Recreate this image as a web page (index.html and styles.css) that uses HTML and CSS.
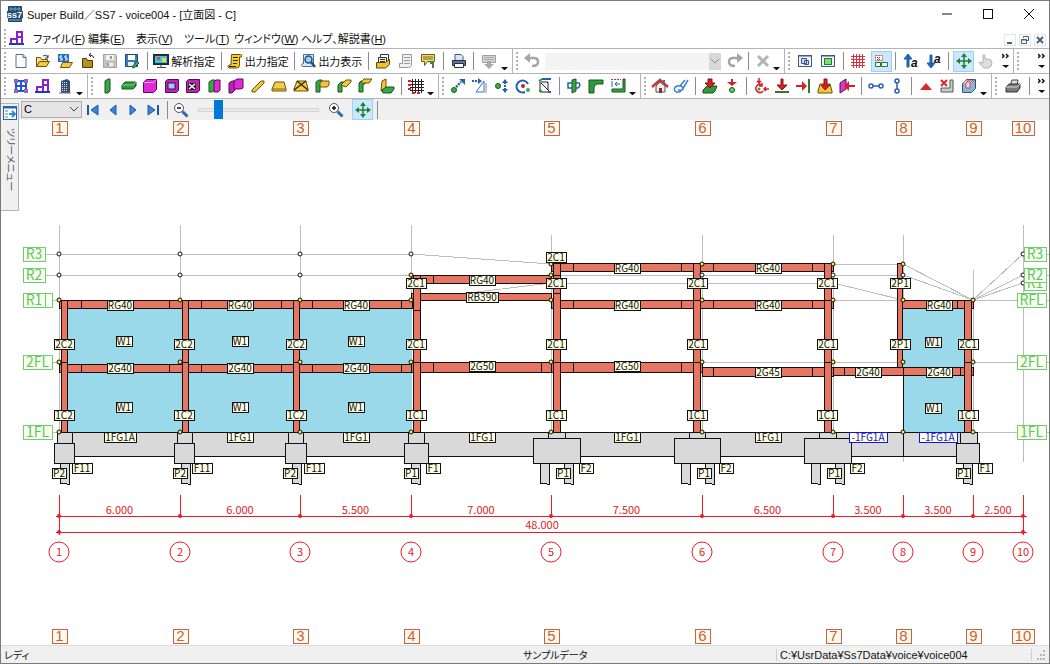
FILE: index.html
```html
<!DOCTYPE html>
<html lang="ja">
<head>
  <meta charset="UTF-8">
  <title>Super Build／SS7 - voice004</title>
  <link rel="stylesheet" href="styles.css">
</head>
<body>
<div class="window">

  <!-- Title bar -->
  <header class="titlebar">
    <svg class="app-icon" viewBox="0 0 16 16"><rect x="1" y="0" width="14" height="16" rx="1" fill="#1d4668"/><path d="M2 3h12M4 1v4M8 1v4M12 1v4" stroke="#6fa3c8" stroke-width="1"/><rect y="5" width="16" height="7" fill="#244f74"/><text x="0" y="12" class="logo-text">ss7</text><path d="M2 14h12" stroke="#85aecb"/></svg>
    <h1>Super Build／SS7 - voice004 - [立面図 - C]</h1>
    <div class="caption-buttons">
      <button title="最小化"><svg viewBox="0 0 10 10"><path d="M0 5h10" stroke="#111"/></svg></button>
      <button title="最大化"><svg viewBox="0 0 10 10"><rect x=".5" y=".5" width="9" height="9" fill="none" stroke="#111"/></svg></button>
      <button title="閉じる"><svg viewBox="0 0 10 10"><path d="M0 0l10 10M10 0L0 10" stroke="#111"/></svg></button>
    </div>
  </header>

  <!-- Menu -->
  <nav class="menubar">
    <i class="grip"></i>
    <svg class="menu-icon" viewBox="0 0 16 16"><path d="M2 14V9h6v5M8 9V2h5v12M8 7h5" fill="none" stroke="#8a1fd0" stroke-width="2"/><path d="M0 14h15" stroke="#1b34e0" stroke-width="2"/></svg>
    <ul>
      <li><a href="#">ファイル(<u>F</u>)</a></li>
      <li><a href="#">編集(<u>E</u>)</a></li>
      <li><a href="#">表示(<u>V</u>)</a></li>
      <li><a href="#">ツール(<u>T</u>)</a></li>
      <li><a href="#">ウィンドウ(<u>W</u>)</a></li>
      <li><a href="#">ヘルプ、解説書(<u>H</u>)</a></li>
    </ul>
    <div class="mdi-buttons">
      <button title="最小化"><svg viewBox="0 0 10 10"><path d="M2 8h5" stroke="#4a6078" stroke-width="2"/></svg></button>
      <button title="元に戻す"><svg viewBox="0 0 10 10"><path d="M3.500 3V1.500h5v4H7M1.500 4.500h5v4h-5zM1.500 5h5" fill="none" stroke="#4a6078"/></svg></button>
      <button title="閉じる"><svg viewBox="0 0 10 10"><path d="M2 2l6 6M8 2L2 8" stroke="#4a6078" stroke-width="2"/></svg></button>
    </div>
  </nav>

  <!-- Toolbar 1 -->
  <div class="toolbar">
    <div class="band band-file">
      <i class="grip"></i>
      <button class="tool" title="新規作成"><svg viewBox="0 0 16 16"><path d="M3 1.500h7l3 3v10H3z" fill="#fdfeff" stroke="#5b6b80"/><path d="M10 1.500v3h3" fill="#cfdcf0" stroke="#5b6b80"/></svg></button>
      <button class="tool" title="開く"><svg viewBox="0 0 16 16"><path d="M1.500 13.500v-9h4l1 2h6v2" fill="#f7e08a" stroke="#6b5310"/><path d="M1.500 13.500l3-5h10l-3 5z" fill="#f5c93e" stroke="#6b5310"/><path d="M8 3q3-2 5 1m0-2v3h-3" fill="none" stroke="#333"/></svg></button>
      <button class="tool" title="SS3データを開く"><svg viewBox="0 0 16 16"><rect x="1" y="1" width="11" height="8" fill="#246ec0"/><path d="M5 3H3v2h2v2H3M10 3H8v2h2v2H8" fill="none" stroke="#fff"/><path d="M3.500 14.500l2-5h10l-3 5z" fill="#f5c93e" stroke="#6b5310"/></svg></button>
      <button class="tool" title="閉じる"><svg viewBox="0 0 16 16"><path d="M2.500 14.500v-9h4l1 2h5v7z" fill="#b8901c" stroke="#4c3b06"/><path d="M14 5q-1-3-4-3M11 0L9 2l2 2" fill="none" stroke="#222"/></svg></button>
      <button class="tool" title="上書き保存"><svg viewBox="0 0 16 16"><path d="M1.500 1.500h12l1 1v12h-13z" fill="#c9c9c9" stroke="#a2a2a2"/><rect x="4" y="2" width="8" height="5" fill="#f4f4f4"/><rect x="4" y="9" width="8" height="5" fill="#eee" stroke="#aaa"/><path d="M9 3v3M6 10v3" stroke="#999" stroke-width="2"/></svg></button>
      <button class="tool" title="名前を付けて保存"><svg viewBox="0 0 16 16"><path d="M1.500 1.500h12v12h-12z" fill="#3a7ab8" stroke="#1f4a78"/><rect x="4" y="2" width="7" height="5" fill="#fff"/><rect x="4" y="9" width="6" height="4" fill="#e3edf6"/><path d="M8 14l5-6 2 2-5 5z" fill="#41a853" stroke="#1c5c28"/></svg></button>
      <i class="sep"></i>
      <button class="tool wide" title="解析指定"><svg viewBox="0 0 16 16"><rect x=".5" y="1.500" width="15" height="10" fill="#25333c" stroke="#1a2830"/><rect x="2" y="3" width="12" height="7" fill="#35c6e0"/><path d="M4 4h3v3H4z" fill="#e04040"/><path d="M9 5h4v4H9z" fill="#f4d640"/><path d="M8 12v2M4 14.500h9" stroke="#444" stroke-width="1"/></svg>解析指定</button>
      <i class="sep"></i>
      <button class="tool wide" title="出力指定"><svg viewBox="0 0 16 16"><path d="M4.500 1.500h9q2 0 1 2.500h-2v8q0 3-3 3H2q-2-1 0-3h2z" fill="#f4cd2c" stroke="#6a5004"/><path d="M6 4.500h5M6 7.500h5M6 10.500h4M2 13.500h7" stroke="#3a2b00"/></svg>出力指定</button>
      <i class="sep"></i>
      <button class="tool wide" title="出力表示"><svg viewBox="0 0 16 16"><path d="M3.500 1.500h10v10q0 2-2 2h-9q-2-1 0-3h1z" fill="#dfe9f5" stroke="#4c6c92"/><circle cx="8.500" cy="6.500" r="3.500" fill="#9cd0f5" stroke="#234f86" stroke-width="1.500"/><path d="M11 9l4 5" stroke="#234f86" stroke-width="2.500"/></svg>出力表示</button>
      <i class="sep"></i>
      <button class="tool" title="文書一覧"><svg viewBox="0 0 16 16"><path d="M5.500 1.500h8v8h-8z" fill="#fff" stroke="#333"/><path d="M3.500 4.500h8v7h-8zM5 6.500h5M5 8.500h5" fill="#eee" stroke="#333"/><path d="M1.500 9.500h9l4-3v5l-4 3.500h-9z" fill="#f2c22e" stroke="#5d4706"/></svg></button>
      <button class="tool" title="リスト"><svg viewBox="0 0 16 16"><path d="M4.500 1.500h9v11q-1 2-3 2h-9v-4h3z" fill="#f0f0f0" stroke="#999"/><path d="M6 4.500h6M6 7.500h6M6 10.500h6" stroke="#999"/></svg></button>
      <button class="tool" title="メッセージ"><svg viewBox="0 0 16 16"><path d="M1.500 1.500h13v7h-7l-3 4v-4h-3z" fill="#f3d768" stroke="#6a6020"/><path d="M3 4h10M3 6h10" stroke="#7b6c1e"/><path d="M10 8h4v7h-2v-4h-2z" fill="#45853c"/></svg></button>
      <i class="sep"></i>
      <button class="tool" title="印刷"><svg viewBox="0 0 16 16"><path d="M4 7V1.500h6l2 2V7" fill="#d7e5fa" stroke="#40557a"/><path d="M1.500 7.500h13v5h-13z" fill="#67788e" stroke="#263142"/><path d="M3.500 10.500h9v4h-9z" fill="#fff" stroke="#263142"/></svg></button>
      <i class="sep"></i>
      <button class="tool" title="画像出力"><svg viewBox="0 0 16 16"><path d="M1.500 2.500h13v7h-13z" fill="#d5d5d5" stroke="#a0a0a0"/><path d="M3 4.500h10M3 6.500h10" stroke="#aaa"/><path d="M6 8h4v3h3l-5 5-5-5h3z" fill="#aaa"/></svg></button>
      <button class="more" title="その他"></button>
    </div>
    <div class="band band-undo">
      <i class="grip"></i>
      <button class="tool" title="元に戻す"><svg viewBox="0 0 16 16"><path d="M4 5h6q4 0 4 4t-6 4" fill="none" stroke="#a5a5a5" stroke-width="2.500"/><path d="M6 0v10L0 5z" fill="#a5a5a5"/></svg></button>
      <span class="history">
        <select aria-label="操作履歴" disabled></select>
        <svg viewBox="0 0 8 5"><path d="M0 0l4 4 4-4" fill="none" stroke="#8c8c8c"/></svg>
      </span>
      <button class="tool" title="やり直し"><svg viewBox="0 0 16 16"><path d="M12 5H6q-4 0-4 4t6 4" fill="none" stroke="#a5a5a5" stroke-width="2.500"/><path d="M10 0v10l6-5z" fill="#a5a5a5"/></svg></button>
      <i class="sep"></i>
      <button class="tool" title="削除"><svg viewBox="0 0 16 16"><path d="M3 3l10 10M13 3L3 13" stroke="#b3b3b3" stroke-width="3"/></svg></button>
      <button class="more" title="その他"></button>
    </div>
    <div class="band band-view">
      <i class="grip"></i>
      <button class="tool" title="部材表示"><svg viewBox="0 0 16 16"><rect x="1.500" y="2.500" width="13" height="11" fill="#eef4fc" stroke="#40578a"/><path d="M2 3h12" stroke="#40578a" stroke-width="1"/><path d="M4.500 5.500h5v5h-5zM7.500 7.500h4v4h-4z" fill="#cfd7e8" stroke="#40578a"/></svg></button>
      <button class="tool" title="全体表示"><svg viewBox="0 0 16 16"><rect x="1.500" y="2.500" width="13" height="11" fill="#eef4fc" stroke="#40578a"/><path d="M2 3h12" stroke="#40578a" stroke-width="1"/><rect x="4.500" y="5.500" width="7" height="6" fill="#7ddf70" stroke="#228030"/></svg></button>
      <i class="sep"></i>
      <button class="tool" title="グリッド"><svg viewBox="0 0 16 16"><path d="M3.500 1v14M6.500 1v14M9.500 1v14M12.500 1v14M1 3.500h14M1 6.500h14M1 9.500h14M1 12.500h14" stroke="#d8303c"/></svg></button>
      <button class="tool on" title="記号表示"><svg viewBox="0 0 16 16"><path d="M2.500 2.500h7v5h-7z" fill="#fff" stroke="#c05050" stroke-dasharray="2 1"/><path d="M4 4l3 3M7 4L4 7" stroke="#c03030"/><path d="M2.500 9.500h5v4h-5zM8.500 9.500h6v4h-6z" fill="#fff" stroke="#207a2c"/></svg></button>
      <i class="sep"></i>
      <button class="tool" title="文字拡大"><svg viewBox="0 0 16 16"><path d="M4 14V6H1l4-5 4 5H6v8z" fill="#1c62b8" stroke="#1c62b8"/><text x="8" y="14" class="glyph-a">a</text></svg></button>
      <button class="tool" title="文字縮小"><svg viewBox="0 0 16 16"><path d="M4 2v8H1l4 5 4-5H6V2z" fill="#1c62b8" stroke="#1c62b8"/><text x="8" y="10" class="glyph-a">a</text></svg></button>
      <i class="sep"></i>
      <button class="tool on" title="移動"><svg viewBox="0 0 16 16"><path d="M8 2v12M2 8h12" stroke="#208038" stroke-width="1.500"/><path d="M8 0l3 4H5zM8 16l3-4H5zM0 8l4-3v6zM16 8l-4-3v6z" fill="#208038"/></svg></button>
      <button class="tool" title="つかむ"><svg viewBox="0 0 16 16"><path d="M5 2q2-1 2 2v2h3q4 0 4 4t-4 5H6q-3-2-5-6l4 1z" fill="#ddd" stroke="#b4b4b4"/></svg></button>
      <button class="chevron" title="その他"><svg viewBox="0 0 8 16"><path d="M0 1l2 2-2 2M4 1l2 2-2 2" fill="none" stroke="#111" stroke-width="1.500"/><path d="M0 12h7l-3 3z" fill="#111"/></svg></button>
    </div>
    <div class="band band-last">
      <i class="grip"></i>
      <button class="chevron" title="その他"><svg viewBox="0 0 8 16"><path d="M0 1l2 2-2 2M4 1l2 2-2 2" fill="none" stroke="#111" stroke-width="1.500"/><path d="M0 12h7l-3 3z" fill="#111"/></svg></button>
    </div>
  </div>

  <!-- Toolbar 2 -->
  <div class="toolbar">
    <div class="band band-frame">
      <i class="grip"></i>
      <button class="tool" title="伏図"><svg viewBox="0 0 16 16"><path d="M3 3h10v10H3zM8 3v10M3 8h10" fill="none" stroke="#1e58d8" stroke-width="2"/><path d="M1 1h4v4H1zM11 1h4v4h-4zM1 11h4v4H1zM11 11h4v4h-4z" fill="#9a62b8"/></svg></button>
      <button class="tool" title="立面図"><svg viewBox="0 0 16 16"><path d="M2 14V9h6v5M8 9V2h5v12M8 7h5" fill="none" stroke="#8a1fd0" stroke-width="2"/><path d="M0 14h15" stroke="#1b34e0" stroke-width="2"/></svg></button>
      <button class="tool" title="建物"><svg viewBox="0 0 16 16"><path d="M4 3l6-2 3 2v12H4z" fill="#35506e"/><path d="M5 4.500h5M5 6.500h5M5 8.500h5M5 10.500h5M5 12.500h5" stroke="#d6e6f5" stroke-dasharray="1 1"/><path d="M2 15h12" stroke="#777"/></svg></button>
      <button class="more" title="その他"></button>
    </div>
    <div class="band band-member">
      <i class="grip"></i>
      <button class="tool" title="柱"><svg viewBox="0 0 16 16"><path d="M6 3l3-2h2v12l-2 2H6z" fill="#3aa648" stroke="#14571e"/></svg></button>
      <button class="tool" title="梁"><svg viewBox="0 0 16 16"><path d="M1 7l3-3h11v4l-3 3H1z" fill="#2f9a3c" stroke="#14571e"/><path d="M1 7h11l3-3" fill="none" stroke="#7fd388"/></svg></button>
      <button class="tool" title="壁"><svg viewBox="0 0 16 16"><path d="M1.500 4.500l3-3h10v10l-3 3h-10z" fill="#e02ad6" stroke="#5a0a56"/><path d="M2 4.500h10l2-3" fill="none" stroke="#f7a0f2"/></svg></button>
      <button class="tool" title="開口"><svg viewBox="0 0 16 16"><path d="M1.500 3.500l2-2h11v11l-2 2h-11z" fill="#c022b8" stroke="#5a0a56"/><rect x="4" y="5" width="7" height="6" fill="#8cd3f5" stroke="#4a0a46"/></svg></button>
      <button class="tool" title="開口削除"><svg viewBox="0 0 16 16"><path d="M1.500 3.500l2-2h11v11l-2 2h-11z" fill="#c022b8" stroke="#5a0a56"/><rect x="3" y="5" width="8" height="7" fill="#222"/><path d="M4 6l6 5M10 6l-6 5" stroke="#fff" stroke-width="1.500"/></svg></button>
      <button class="tool" title="袖壁"><svg viewBox="0 0 16 16"><path d="M2 4l3-2h3v10l-3 2H2z" fill="#3aa648" stroke="#14571e"/><path d="M7 4l2-2h4v10l-2 2H7z" fill="#e02ad6" stroke="#5a0a56"/></svg></button>
      <button class="tool" title="腰壁"><svg viewBox="0 0 16 16"><path d="M1 5l3-2h3v9l-3 3H1z" fill="#c022b8" stroke="#5a0a56"/><path d="M6 3l3-2h6v9l-3 1H6z" fill="#e02ad6" stroke="#5a0a56"/></svg></button>
      <button class="tool" title="ブレース"><svg viewBox="0 0 16 16"><path d="M2 12l9-9h3v2l-9 9H2z" fill="#f2c73a" stroke="#6a5004"/></svg></button>
      <button class="tool" title="床"><svg viewBox="0 0 16 16"><path d="M4 4h9l2 7v2H1v-2z" fill="#f2cd4a" stroke="#6a5004"/><path d="M1 11h14" stroke="#8a6a0c"/></svg></button>
      <button class="tool" title="床ブレース"><svg viewBox="0 0 16 16"><path d="M4 3h9l2 8v2H1v-2z" fill="#f2cd4a" stroke="#6a5004"/><path d="M4 3l11 9M13 3L1 12" stroke="#3c2c00" stroke-width="1.500"/></svg></button>
      <button class="tool" title="片持梁"><svg viewBox="0 0 16 16"><path d="M2 4l3-2h3v4l-2 1v7H2z" fill="#3aa648" stroke="#14571e"/><path d="M6 5l2-2h7v4l-2 2H6z" fill="#f2c73a" stroke="#6a5004"/></svg></button>
      <button class="tool" title="片持床"><svg viewBox="0 0 16 16"><path d="M2 7l3-3h3l-2 4v6H2z" fill="#3aa648" stroke="#14571e"/><path d="M5 7l5-5h5v2l-5 5z" fill="#f2c73a" stroke="#6a5004"/></svg></button>
      <button class="tool" title="出隅"><svg viewBox="0 0 16 16"><path d="M2 5l2-2h4v3H6v8H2z" fill="#3aa648" stroke="#14571e"/><path d="M4 4l3-3h8l-3 4H5z" fill="#f2c73a" stroke="#6a5004"/></svg></button>
      <button class="tool" title="入隅"><svg viewBox="0 0 16 16"><path d="M3 3l4-2v8l-2 4H2z" fill="#f2c73a" stroke="#6a5004"/><path d="M3 12l4-3h8v2l-3 4H4z" fill="#3aa648" stroke="#14571e"/></svg></button>
      <i class="sep"></i>
      <button class="tool" title="配置グリッド"><svg viewBox="0 0 16 16"><path d="M4.500 1v14M7.500 1v14M10.500 1v14M13.500 1v14M2 3.500h14M2 6.500h14M2 9.500h14M2 12.500h14" stroke="#222"/><path d="M0 2h3v2H0zM0 6h3v2H0zM0 10h3v2H0zM4 14h3v2H4zM9 14h3v2H9z" fill="#e01c24"/></svg></button>
      <button class="more" title="その他"></button>
    </div>
    <div class="band band-node">
      <i class="grip"></i>
      <button class="tool" title="節点移動"><svg viewBox="0 0 16 16"><circle cx="4" cy="12" r="2.500" fill="#3cae4a" stroke="#14571e"/><path d="M6 9l5-5" stroke="#2461b4" stroke-width="2.500" stroke-dasharray="2 1"/><path d="M9 1h6v6z" fill="#2461b4"/></svg></button>
      <button class="tool" title="軸振れ"><svg viewBox="0 0 16 16"><path d="M0 3h7" stroke="#2461b4" stroke-width="2" stroke-dasharray="2 1"/><path d="M6 0l4 3-4 3z" fill="#2461b4"/><path d="M12 3v11H4z" fill="none" stroke="#3272d0"/><path d="M14 5v10" stroke="#888"/></svg></button>
      <button class="tool" title="上下移動"><svg viewBox="0 0 16 16"><circle cx="4" cy="8" r="2.500" fill="#3cae4a" stroke="#14571e"/><path d="M11 4v8" stroke="#2461b4" stroke-width="2" stroke-dasharray="2 1"/><path d="M8 5l3-4 3 4zM8 11l3 4 3-4z" fill="#2461b4"/></svg></button>
      <button class="tool" title="回転"><svg viewBox="0 0 16 16"><path d="M13 6A6 6 0 1 0 10 14" fill="none" stroke="#2461b4" stroke-width="2"/><circle cx="8" cy="8" r="2" fill="#c42020"/><circle cx="13" cy="12" r="2" fill="#3cae4a"/></svg></button>
      <button class="tool" title="傾斜"><svg viewBox="0 0 16 16"><path d="M3 3v11h9M4 5l8 8M4 4h7v8" fill="none" stroke="#222"/><path d="M5 1h9M11 14h3" stroke="#2461b4" stroke-width="2"/><path d="M2 3l3-2M2 13h3" stroke="#2f9a3c" stroke-width="2"/></svg></button>
      <i class="sep"></i>
      <button class="tool" title="部材回転"><svg viewBox="0 0 16 16"><path d="M6 5H2v5h4M9 5h4q2 3-1 5H9" fill="none" stroke="#2461b4" stroke-width="1.500"/><path d="M6 2l4-1v12l-4 2z" fill="#3aa648" stroke="#14571e"/></svg></button>
      <button class="tool" title="ハンチ"><svg viewBox="0 0 16 16"><path d="M1 2h14v4H9q-3 1-3 4v5H1z" fill="#2f9a3c" stroke="#14571e"/></svg></button>
      <button class="tool" title="寄り"><svg viewBox="0 0 16 16"><path d="M1 1.500h10" stroke="#d03030" stroke-dasharray="2 1"/><path d="M13 1h2v13H2v-3h11z" fill="#3aa648" stroke="#14571e"/><path d="M2 3v6M5 6h5M7 4L5 6l2 2" fill="none" stroke="#2461b4"/></svg></button>
      <button class="more" title="その他"></button>
    </div>
    <div class="band band-load">
      <i class="grip"></i>
      <button class="tool" title="屋根"><svg viewBox="0 0 16 16"><path d="M4 8v6h9V8L8 4z" fill="#eee" stroke="#555"/><path d="M0 9l8-7 8 7" fill="none" stroke="#c43a32" stroke-width="2.500"/><path d="M7 10h3v5H7z" fill="#7a3320"/><path d="M12 2v4" stroke="#666" stroke-width="2"/></svg></button>
      <button class="tool" title="クリップ"><svg viewBox="0 0 16 16"><path d="M15 2l-6 10q-4 4-7 1-2-3 2-5 5-1 6 2t-5 2M12 2L7 8" fill="none" stroke="#3c82cc" stroke-width="1.500"/></svg></button>
      <i class="sep"></i>
      <button class="tool" title="床荷重"><svg viewBox="0 0 16 16"><path d="M1 12l4-4h10l-2 5-2 2H1z" fill="#2f9a3c" stroke="#14571e"/><path d="M6 1h4v4h3l-5 5-5-5h3z" fill="#d81e26" stroke="#8a0c10"/></svg></button>
      <button class="tool" title="節点荷重"><svg viewBox="0 0 16 16"><path d="M7 1h2v3h4L8 8 3 4h4z" fill="#d81e26"/><circle cx="8" cy="12" r="2.500" fill="#5ad068" stroke="#14571e"/></svg></button>
      <i class="sep"></i>
      <button class="tool" title="モーメント荷重"><svg viewBox="0 0 16 16"><path d="M6 0v4M4 3l2 2 2-2M16 11h-4M13 9l-2 2 2 2M9 7a4 4 0 1 0 1 6M9 5v3H6" fill="none" stroke="#d81e26" stroke-width="1.500"/><circle cx="6" cy="11" r="1.500" fill="#2f9a3c"/></svg></button>
      <button class="tool" title="鉛直荷重"><svg viewBox="0 0 16 16"><path d="M7 1h2v6h4l-5 5-5-5h4z" fill="#d81e26" stroke="#9a1015"/><path d="M1 14h14" stroke="#2f7a30" stroke-width="2"/></svg></button>
      <button class="tool" title="水平荷重"><svg viewBox="0 0 16 16"><path d="M0 7h6V3l5 5-5 5V9H0z" fill="#d81e26"/><path d="M13 1v14" stroke="#2f7a30" stroke-width="2"/></svg></button>
      <button class="tool" title="面荷重"><svg viewBox="0 0 16 16"><path d="M3 6h10l2 7v2H1v-2z" fill="#f2c73a" stroke="#6a5004"/><path d="M7 1h3v6h3l-5 5-4-5h3z" fill="#d81e26" stroke="#9a1015"/></svg></button>
      <button class="tool" title="壁荷重"><svg viewBox="0 0 16 16"><path d="M1 5l6-4v10l-6 4z" fill="#d638cc" stroke="#5a0a56"/><path d="M16 7h-6V3L5 8l5 5V9h6z" fill="#d81e26"/></svg></button>
      <i class="sep"></i>
      <button class="tool" title="剛床"><svg viewBox="0 0 16 16"><circle cx="3" cy="8" r="2" fill="#fff" stroke="#2461b4" stroke-width="1.500"/><circle cx="13" cy="8" r="2" fill="#fff" stroke="#2461b4" stroke-width="1.500"/><path d="M5 8h6" stroke="#2461b4" stroke-width="1.500"/></svg></button>
      <button class="tool" title="同一変位"><svg viewBox="0 0 16 16"><circle cx="8" cy="3" r="2" fill="#fff" stroke="#2461b4" stroke-width="1.500"/><circle cx="8" cy="13" r="2" fill="#fff" stroke="#2461b4" stroke-width="1.500"/><path d="M8 5v6" stroke="#2461b4" stroke-width="1.500"/></svg></button>
      <i class="sep"></i>
      <button class="tool" title="支点"><svg viewBox="0 0 16 16"><path d="M8 5l6 7H2z" fill="#e0262c"/></svg></button>
      <button class="tool" title="部材無効"><svg viewBox="0 0 16 16"><path d="M11 2h3v12H2v-4h9z" fill="#ccc" stroke="#555"/><path d="M2 2l6 6M8 2L2 8" stroke="#e0262c" stroke-width="2"/></svg></button>
      <button class="tool" title="ブロック"><svg viewBox="0 0 16 16"><path d="M1.500 5.500l4-4h9v9l-4 4h-9z" fill="#88b6d8" stroke="#31536f"/><path d="M2 5l3-3h3L5 5v5h4V5l3-3h2l-3 3" fill="#f6dada" stroke="#d8484e"/></svg></button>
      <button class="more" title="その他"></button>
    </div>
    <div class="band band-print">
      <i class="grip"></i>
      <button class="tool" title="図面出力"><svg viewBox="0 0 16 16"><path d="M5 8l2-6h6l-1 6" fill="#ddd" stroke="#444"/><path d="M1 9l3-3h11v4l-3 4H1z" fill="#7b7b7b" stroke="#333"/><path d="M1 9h11l3-3" fill="none" stroke="#ddd"/></svg></button>
      <i class="sep"></i>
      <button class="chevron" title="その他"><svg viewBox="0 0 8 16"><path d="M0 1l2 2-2 2M4 1l2 2-2 2" fill="none" stroke="#111" stroke-width="1.500"/><path d="M0 12h7l-3 3z" fill="#111"/></svg></button>
    </div>
  </div>

  <!-- Work area -->
  <main class="work">
    <aside class="dock">
      <button class="tree-tab"><svg viewBox="0 0 14 14"><rect x=".5" y=".5" width="13" height="13" fill="#fff" stroke="#2263b8"/><path d="M0 1h14" stroke="#2263b8" stroke-width="3"/><path d="M2 5h3M2 8h3M2 11h3" stroke="#4b83c8"/><path d="M6 8h5M9 5l3 3-3 3" fill="none" stroke="#2a8ad6" stroke-width="2"/></svg><span>ツリーメニュー</span></button>
    </aside>

    <section class="view">
      <div class="viewbar">
        <label class="frame-pick">
          <select aria-label="フレーム"><option>C</option></select>
          <svg viewBox="0 0 8 5"><path d="M0 0l4 4 4-4" fill="none" stroke="#444"/></svg>
        </label>
        <button class="step" title="先頭"><svg viewBox="0 0 12 12"><path d="M1 1v10" stroke="#1f57a8" stroke-width="2"/><path d="M11 1v10L4 6z" fill="#3a84dc" stroke="#1f57a8"/></svg></button>
        <button class="step" title="前へ"><svg viewBox="0 0 12 12"><path d="M9 1v10L3 6z" fill="#3a84dc" stroke="#1f57a8"/></svg></button>
        <button class="step" title="次へ"><svg viewBox="0 0 12 12"><path d="M3 1v10l6-5z" fill="#3a84dc" stroke="#1f57a8"/></svg></button>
        <button class="step" title="末尾"><svg viewBox="0 0 12 12"><path d="M11 1v10" stroke="#1f57a8" stroke-width="2"/><path d="M1 1v10l7-5z" fill="#3a84dc" stroke="#1f57a8"/></svg></button>
        <i class="sep"></i>
        <button class="tool" title="縮小"><svg viewBox="0 0 16 16"><circle cx="6" cy="6" r="4.500" fill="#fff" stroke="#555"/><path d="M4 6h4" stroke="#111" stroke-width="1.500"/><path d="M9.500 9.500l5 5" stroke="#2c68b0" stroke-width="3"/></svg></button>
        <input class="zoom" type="range" min="0" max="100" value="14" aria-label="表示倍率">
        <button class="tool" title="拡大"><svg viewBox="0 0 16 16"><circle cx="6" cy="6" r="4.500" fill="#fff" stroke="#555"/><path d="M4 6h4M6 4v4" stroke="#111" stroke-width="1.500"/><path d="M9.500 9.500l5 5" stroke="#2c68b0" stroke-width="3"/></svg></button>
        <button class="tool on" title="移動"><svg viewBox="0 0 16 16"><path d="M8 2v12M2 8h12" stroke="#208038" stroke-width="1.500"/><path d="M8 0l3 4H5zM8 16l3-4H5zM0 8l4-3v6zM16 8l-4-3v6z" fill="#208038"/></svg></button>
        <i class="sep"></i>
      </div>
      <svg id="elevation" class="elevation" viewBox="20 120 1029 525" preserveAspectRatio="xMidYMin meet" role="img" aria-label="立面図 C"></svg>
    </section>
  </main>

  <!-- Status bar -->
  <footer class="statusbar">
    <span class="status-ready">レディ</span>
    <span class="status-name">サンプルデータ</span>
    <span class="status-path">C:¥UsrData¥Ss7Data¥voice¥voice004</span>
    <svg viewBox="0 0 12 12"><path d="M8 1h2v2H8zM5 5h2v2H5zM8 5h2v2H8zM2 9h2v2H2zM5 9h2v2H5zM8 9h2v2H8z" fill="#b5b5b5"/></svg>
  </footer>

</div>
<script src="elevation.js"></script>
</body>
</html>
```
FILE: styles.css
```css
* {
  box-sizing: border-box;
}

body {
  margin: 0;
  font-family: "Liberation Sans", "Noto Sans CJK JP", sans-serif;
  font-size: 11px;
  color: #111;
}

button {
  padding: 0;
  border: 0;
  background: none;
  font: inherit;
  color: inherit;
}

svg {
  display: block;
}

.window {
  display: flex;
  flex-direction: column;
  height: 100vh;
  border: 1px solid #7a7a7a;
  background-color: #fff;
}

/* title bar */
.titlebar {
  display: flex;
  align-items: center;
  height: 26px;
  padding-left: 6px;
}

.app-icon {
  width: 16px;
  height: 16px;
  margin-right: 4px;
}

.logo-text {
  font: bold 9px "Liberation Sans", sans-serif;
  fill: #fff;
}

h1 {
  flex: 1;
  margin: 0;
  font-size: 11px;
  font-weight: normal;
}

.caption-buttons {
  display: flex;
}

.caption-buttons button {
  width: 41px;
  height: 26px;
}

.caption-buttons svg {
  width: 10px;
  height: 10px;
  margin: 0 auto;
}

/* menu */
.menubar {
  display: flex;
  align-items: center;
  height: 22px;
  border-bottom: 1px solid #b4b4b4;
}

.menu-icon {
  width: 16px;
  height: 16px;
  margin: 0 8px 0 0;
}

.menubar ul {
  display: grid;
  grid-template-columns: 55px 48px 48px 50px 67px auto;
  flex: 1;
  justify-content: start;
  margin: 0;
  padding: 0;
  list-style: none;
  white-space: nowrap;
  font-feature-settings: "palt";
}

.menubar a {
  color: #111;
  text-decoration: none;
}

.mdi-buttons {
  display: flex;
  gap: 3px;
  padding: 4px 3px 0 0;
}

.mdi-buttons button {
  width: 12px;
  height: 12px;
  border: 1px solid #e2e6ea;
}

.mdi-buttons svg {
  width: 10px;
  height: 10px;
}

/* toolbars */
.toolbar {
  display: flex;
  height: 25px;
  border-bottom: 1px solid #b4b4b4;
}

.band {
  display: flex;
  flex: none;
  align-items: center;
  justify-content: space-between;
  padding-right: 4px;
  border-right: 1px solid #b4b4b4;
}

.band:last-child {
  flex: 1;
  border-right: 0;
}

.band-file { width: 512px; }
.band-undo { width: 272px; }
.band-view { width: 229px; padding-right: 0; }
.band-frame { width: 87px; }
.band-member { width: 351px; }
.band-node { width: 202px; }
.band-load { width: 351px; }
.band-last, .band-print { padding-right: 0; }

.grip {
  width: 2px;
  height: 18px;
  margin: 0 3px;
  background: repeating-linear-gradient(#b0b0b0 0 2px, transparent 2px 4px);
}

.sep {
  width: 1px;
  height: 18px;
  margin: 0 3px;
  background-color: #8c8c8c;
}

.band-view .sep {
  margin: 0 2px;
}

.tool {
  flex: none;
  width: 21px;
  height: 21px;
}

.tool svg {
  width: 16px;
  height: 16px;
  margin: 0 auto;
  overflow: visible;
}

.tool.on {
  border: 1px solid #99d1ff;
  background-color: #cce8ff;
}

.tool.wide {
  display: flex;
  align-items: center;
  gap: 2px;
  width: auto;
  padding: 0 1px;
}

.more {
  align-self: end;
  width: 7px;
  height: 10px;
}

.more::after {
  content: "";
  display: block;
  border: 3px solid transparent;
  border-top-color: #111;
  border-bottom: 0;
}

.chevron {
  width: 14px;
}

.chevron svg {
  width: 8px;
  height: 16px;
  margin: 0 auto;
}

.glyph-a {
  font: italic bold 12px "Liberation Sans", sans-serif;
  fill: #111;
}

.history {
  position: relative;
  flex: 1;
  margin: 0 3px;
}

.history select {
  display: block;
  width: 100%;
  height: 17px;
  border: 0;
  border-right: 12px solid #c8c8c8;
  background-color: #f0f0f0;
  appearance: none;
}

.history svg {
  position: absolute;
  top: 6px;
  right: 2px;
  width: 8px;
  height: 5px;
}

/* work area */
.work {
  display: flex;
  flex: 1;
  min-height: 0;
}

.dock {
  display: flex;
  align-items: start;
  width: 19px;
  padding-top: 4px;
  background: linear-gradient(#f0f0f0 21px, #fff 21px);
}

.tree-tab {
  display: flex;
  flex-direction: column;
  align-items: center;
  gap: 8px;
  width: 18px;
  height: 108px;
  padding-top: 2px;
  border: 1px solid #b4b4b4;
  border-left: 0;
  background-color: #f0f0f0;
  color: #555;
  font-size: 10px;
}

.tree-tab svg {
  width: 14px;
  height: 14px;
}

.tree-tab span {
  writing-mode: vertical-rl;
  text-orientation: sideways;
  line-height: 14px;
  font-feature-settings: "palt";
}

.view {
  display: flex;
  flex: 1;
  flex-direction: column;
  min-width: 0;
}

.viewbar {
  display: flex;
  align-items: center;
  height: 21px;
  padding-left: 1px;
  background-color: #f0f0f0;
}

.frame-pick {
  position: relative;
  margin-right: 1px;
}

.frame-pick select {
  display: block;
  width: 61px;
  height: 17px;
  padding: 0 2px;
  border: 1px solid #adadad;
  background-color: #e4e4e4;
  font: 11px/15px "Liberation Sans", sans-serif;
  appearance: none;
}

.frame-pick svg {
  position: absolute;
  top: 6px;
  right: 4px;
  width: 8px;
  height: 5px;
  pointer-events: none;
}

.step {
  width: 20px;
  height: 20px;
}

.step svg {
  width: 12px;
  height: 12px;
  margin: 0 auto;
}

.viewbar .sep {
  margin: 0 2px 0 4px;
}

.zoom {
  width: 121px;
  height: 19px;
  margin: 0 6px 0 7px;
  background: none;
  appearance: none;
}

.zoom::-webkit-slider-runnable-track {
  height: 4px;
  border: 1px solid #d6d6d6;
  background-color: #e7eaea;
}

.zoom::-webkit-slider-thumb {
  width: 9px;
  height: 19px;
  margin-top: -9px;
  background-color: #0078d7;
  appearance: none;
}

.zoom + .tool {
  margin-right: 6px;
}

/* elevation drawing */
.elevation {
  flex: 1;
  width: 100%;
  min-height: 0;
  font-family: "Noto Sans CJK JP", sans-serif;
  font-size: 11px;
  text-anchor: middle;
}

.elevation line,
.elevation rect,
.elevation path {
  shape-rendering: crispEdges;
}

.guide { stroke: #bdbdbd; }
.wall { fill: #99d9ea; }
.steel { fill: #e67562; stroke: #111; }
.joint { stroke: #111; }
.concrete { fill: #d9d9d9; stroke: #111; }
.node { fill: #f4ee4a; stroke: #111; }
.node.free { fill: #fff; }

.tag rect { fill: #ffffe6; stroke: #111; }
.tag text { fill: #111; font-size: 10px; }
.tag.minus rect { stroke: #1414e0; }
.tag.minus text { fill: #1414e0; }

.dimension line { stroke: #ee1c24; }
.dimension circle { fill: none; stroke: #ee1c24; }
.dimension circle.dot { fill: #ee1c24; stroke: none; }
.dimension text { fill: #e01c24; }

.axis rect { fill: #fffbe6; stroke: #c8604c; }
.axis text { fill: #c8604c; font: 15px "Liberation Sans", sans-serif; }
.floor rect { fill: #fafff0; stroke: #6cd06c; }
.floor text { fill: #5cc85c; font-size: 14px; }

/* status bar */
.statusbar {
  display: flex;
  align-items: center;
  height: 18px;
  padding: 0 2px 0 3px;
  border-top: 1px solid #dcdcdc;
  background-color: #f0f0f0;
  font-feature-settings: "palt";
}

.status-ready,
.status-name {
  font-size: 10px;
}

.status-ready {
  flex: 1;
}

.status-name {
  width: 253px;
}

.status-path {
  width: 256px;
  padding-left: 3px;
  border-left: 1px solid #d0d0d0;
  border-right: 1px solid #d0d0d0;
}

.statusbar svg {
  width: 12px;
  height: 12px;
  margin-left: 3px;
}
```
FILE: elevation.js
```js
const svg = document.getElementById('elevation');
const parts = [];

const axes = [59, 180, 300, 411, 551, 702, 833, 903, 973, 1023];
const spans = ['6.000', '6.000', '5.500', '7.000', '7.500', '6.500', '3.500', '3.500', '2.500'];

function line(x1, y1, x2, y2, cls) {
  parts.push(`<line class="${cls}" x1="${x1}" y1="${y1}" x2="${x2}" y2="${y2}"/>`);
}

function rect(x1, y1, x2, y2, cls) {
  parts.push(`<rect class="${cls}" x="${x1}" y="${y1}" width="${x2 - x1}" height="${y2 - y1}"/>`);
}

function beam(x1, x2, y1, y2, joints) {
  rect(x1, y1, x2, y2, 'steel');
  joints.forEach(x => line(x, y1, x, y2, 'joint'));
}

function tag(cx, cy, text, cls = 'tag') {
  const w = text[0] === 'W' ? 16 : text.length * 6 + 2;
  const x = Math.floor(cx - w / 2);
  parts.push(`<g class="${cls}"><rect x="${x}" y="${cy - 5}" width="${w}" height="10"/><text x="${x + w / 2}" y="${cy + 4}">${text}</text></g>`);
}

function box(x, y, w, text, cls) {
  parts.push(`<g class="${cls}"><rect x="${x}" y="${y}" width="${w}" height="14"/><text x="${x + w / 2}" y="${y + 12}">${text}</text></g>`);
}

// guide lines
axes.forEach((x, i) => {
  const top = i < 4 || i === 9 ? 225 : i === 8 ? 270 : 235;
  line(x, top, x, 462, 'guide');
});
[
  [45, 254, 411, 254], [411, 254, 551, 264], [833, 264, 903, 264], [903, 264, 973, 300],
  [45, 275, 903, 275], [903, 275, 973, 300],
  [411, 300, 551, 283], [551, 283, 833, 283], [833, 283, 903, 300],
  [52, 300, 411, 300], [833, 300, 1017, 300],
  [973, 300, 1023, 254], [973, 300, 1023, 275], [973, 300, 1023, 283],
  [52, 362, 411, 362], [702, 362, 1017, 362], [52, 432, 1017, 432],
  [1046, 254, 1049, 254], [1046, 275, 1049, 275], [1046, 300, 1049, 300], [1046, 362, 1049, 362], [1046, 432, 1049, 432]
].forEach(g => line(...g, 'guide'));

// walls
[[65, 185], [185, 296], [296, 412]].forEach(([a, b]) => {
  rect(a, 308, b, 364, 'wall');
  rect(a, 372, b, 432, 'wall');
});
rect(903, 308, 966, 367, 'wall');
rect(903, 375, 966, 432, 'wall');

// foundation
rect(70, 432, 962, 456, 'concrete');
line(903, 432, 903, 456, 'joint');

function pile(x, w) {
  parts.push(`<path class="concrete" d="M${x} 463v20l3 1 2-1 2 1h${w - 7}V463z"/>`);
}
[
  [57, 72, 54, 74, 443, [60]],
  [177, 192, 174, 194, 443, [181]],
  [288, 303, 285, 306, 443, [292]],
  [408, 424, 404, 428, 443, [411]],
  [548, 565, 533, 580, 438, [540, 564]],
  [689, 705, 674, 720, 438, [681, 705]],
  [819, 836, 804, 851, 438, [811, 835]],
  [960, 977, 956, 979, 443, [963]]
].forEach(([p1, p2, f1, f2, top, piles]) => {
  piles.forEach(x => pile(x, 9));
  rect(p1, 432, p2, top, 'concrete');
  rect(f1, top, f2, 463, 'concrete');
});

// beams
const jointsWest = [81, 169, 201, 281, 312, 401];
beam(59, 412, 300, 308, jointsWest);
beam(59, 412, 364, 372, jointsWest);
beam(411, 551, 275, 283, [420, 433]);
beam(411, 551, 293, 300, []);
beam(411, 551, 362, 372, [433, 541]);
beam(551, 702, 362, 372, [573, 681]);
beam(551, 833, 263, 271, [573, 681, 713, 812]);
beam(551, 833, 300, 308, [573, 681, 713, 812]);
beam(702, 833, 367, 376, [713, 812]);
beam(833, 973, 367, 375, [844, 903, 960]);
beam(897, 973, 300, 308, [952, 957]);

// columns: x1, x2, top, storey joints
[
  [61, 67, 300, [362]], [182, 188, 300, [362]], [293, 299, 300, [362]],
  [413, 420, 275, [310, 362]], [553, 560, 263, [275, 293, 362]], [693, 700, 263, [300, 362]],
  [824, 831, 263, [300, 362]], [964, 971, 300, [362]]
].forEach(([a, b, top, joints]) => {
  rect(a, top, b, 432, 'steel');
  joints.forEach(y => line(a, y, b, y, 'joint'));
});
rect(897, 263, 902, 367, 'steel');
line(903, 376, 903, 432, 'joint');

// nodes
const fixed = [300, 362, 432];
const nodes = [
  [59, fixed, [254, 275]], [180, fixed, [254, 275]], [300, fixed, [254, 275]],
  [411, [275, ...fixed], [254]], [551, [264, 275, ...fixed], []],
  [702, [264, ...fixed], [275]], [833, [264, ...fixed], [275]], [903, [264, ...fixed], [275]],
  [973, fixed, []], [1023, [], [254, 275, 283]]
];
nodes.forEach(([x, on, free]) => {
  on.forEach(y => parts.push(`<circle class="node" cx="${x}" cy="${y}" r="2"/>`));
  free.forEach(y => parts.push(`<circle class="node free" cx="${x}" cy="${y}" r="2"/>`));
});

// member tags
[120, 240, 356].forEach(x => {
  tag(x, 305, 'RG40');
  tag(x, 368, '2G40');
});
[124, 240, 356].forEach(x => {
  tag(x, 341, 'W1');
  tag(x, 407, 'W1');
});
[64, 184, 296].forEach(x => {
  tag(x, 344, '2C2');
  tag(x, 415, '1C2');
});
[416, 556, 697, 827].forEach(x => {
  tag(x, 283, '2C1');
  tag(x, 344, '2C1');
  tag(x, 415, '1C1');
});
[
  [556, 257, '2C1'], [900, 283, '2P1'], [900, 344, '2P1'], [968, 344, '2C1'], [968, 415, '1C1'],
  [482, 280, 'RG40'], [482, 297, 'RB390'], [482, 366, '2G50'], [627, 366, '2G50'],
  [627, 268, 'RG40'], [627, 305, 'RG40'], [768, 268, 'RG40'], [768, 305, 'RG40'],
  [768, 372, '2G45'], [868, 372, '2G40'], [939, 372, '2G40'], [939, 305, 'RG40'],
  [933, 342, 'W1'], [933, 408, 'W1'],
  [120, 437, '1FG1A'], [240, 437, '1FG1'], [356, 437, '1FG1'], [482, 437, '1FG1'],
  [627, 437, '1FG1'], [768, 437, '1FG1'],
  [82, 468, 'F11'], [202, 468, 'F11'], [314, 468, 'F11'],
  [433, 468, 'F1'], [586, 468, 'F2'], [726, 468, 'F2'], [857, 468, 'F2'], [985, 468, 'F1'],
  [59, 473, 'P2'], [180, 473, 'P2'], [290, 473, 'P2'],
  [411, 473, 'P1'], [563, 473, 'P1'], [704, 473, 'P1'], [834, 473, 'P1'], [963, 473, 'P1']
].forEach(t => tag(...t));
tag(868, 437, '-1FG1A', 'tag minus');
tag(938, 437, '-1FG1A', 'tag minus');

// dimensions
parts.push('<g class="dimension">');
line(56, 516, 1027, 516, '');
line(56, 532, 1027, 532, '');
axes.forEach((x, i) => {
  const outer = i === 0 || i === axes.length - 1;
  line(x, 495, x, outer ? 535 : 518, '');
  parts.push(`<circle class="dot" cx="${x}" cy="516" r="2"/>`);
  if (outer) parts.push(`<circle class="dot" cx="${x}" cy="532" r="2"/>`);
  parts.push(`<circle cx="${x}" cy="552" r="10"/><text x="${x}" y="556">${i + 1}</text>`);
});
spans.forEach((s, i) => parts.push(`<text x="${(axes[i] + axes[i + 1]) / 2}" y="514">${s}</text>`));
parts.push('<text x="542" y="529">48.000</text></g>');

// axis names
axes.forEach((x, i) => {
  const w = i === 9 ? 22 : 15;
  const left = Math.round(x - w / 2);
  box(left, 121, w, i + 1, 'axis');
  box(left, 629, w, i + 1, 'axis');
});

// floor names
box(23, 293, 29, '', 'floor');
[['R3', 247], ['R2', 268], ['R1', 293]].forEach(([t, y]) => box(23, y, 22, t, 'floor'));
[['R1', 276], ['R2', 268], ['R3', 247]].forEach(([t, y]) => box(1024, y, 22, t, 'floor'));
[['2FL', 355], ['1FL', 425]].forEach(([t, y]) => box(23, y, 29, t, 'floor'));
[['RFL', 293], ['2FL', 355], ['1FL', 425]].forEach(([t, y]) => box(1017, y, 29, t, 'floor'));

svg.innerHTML = parts.join('');
```
